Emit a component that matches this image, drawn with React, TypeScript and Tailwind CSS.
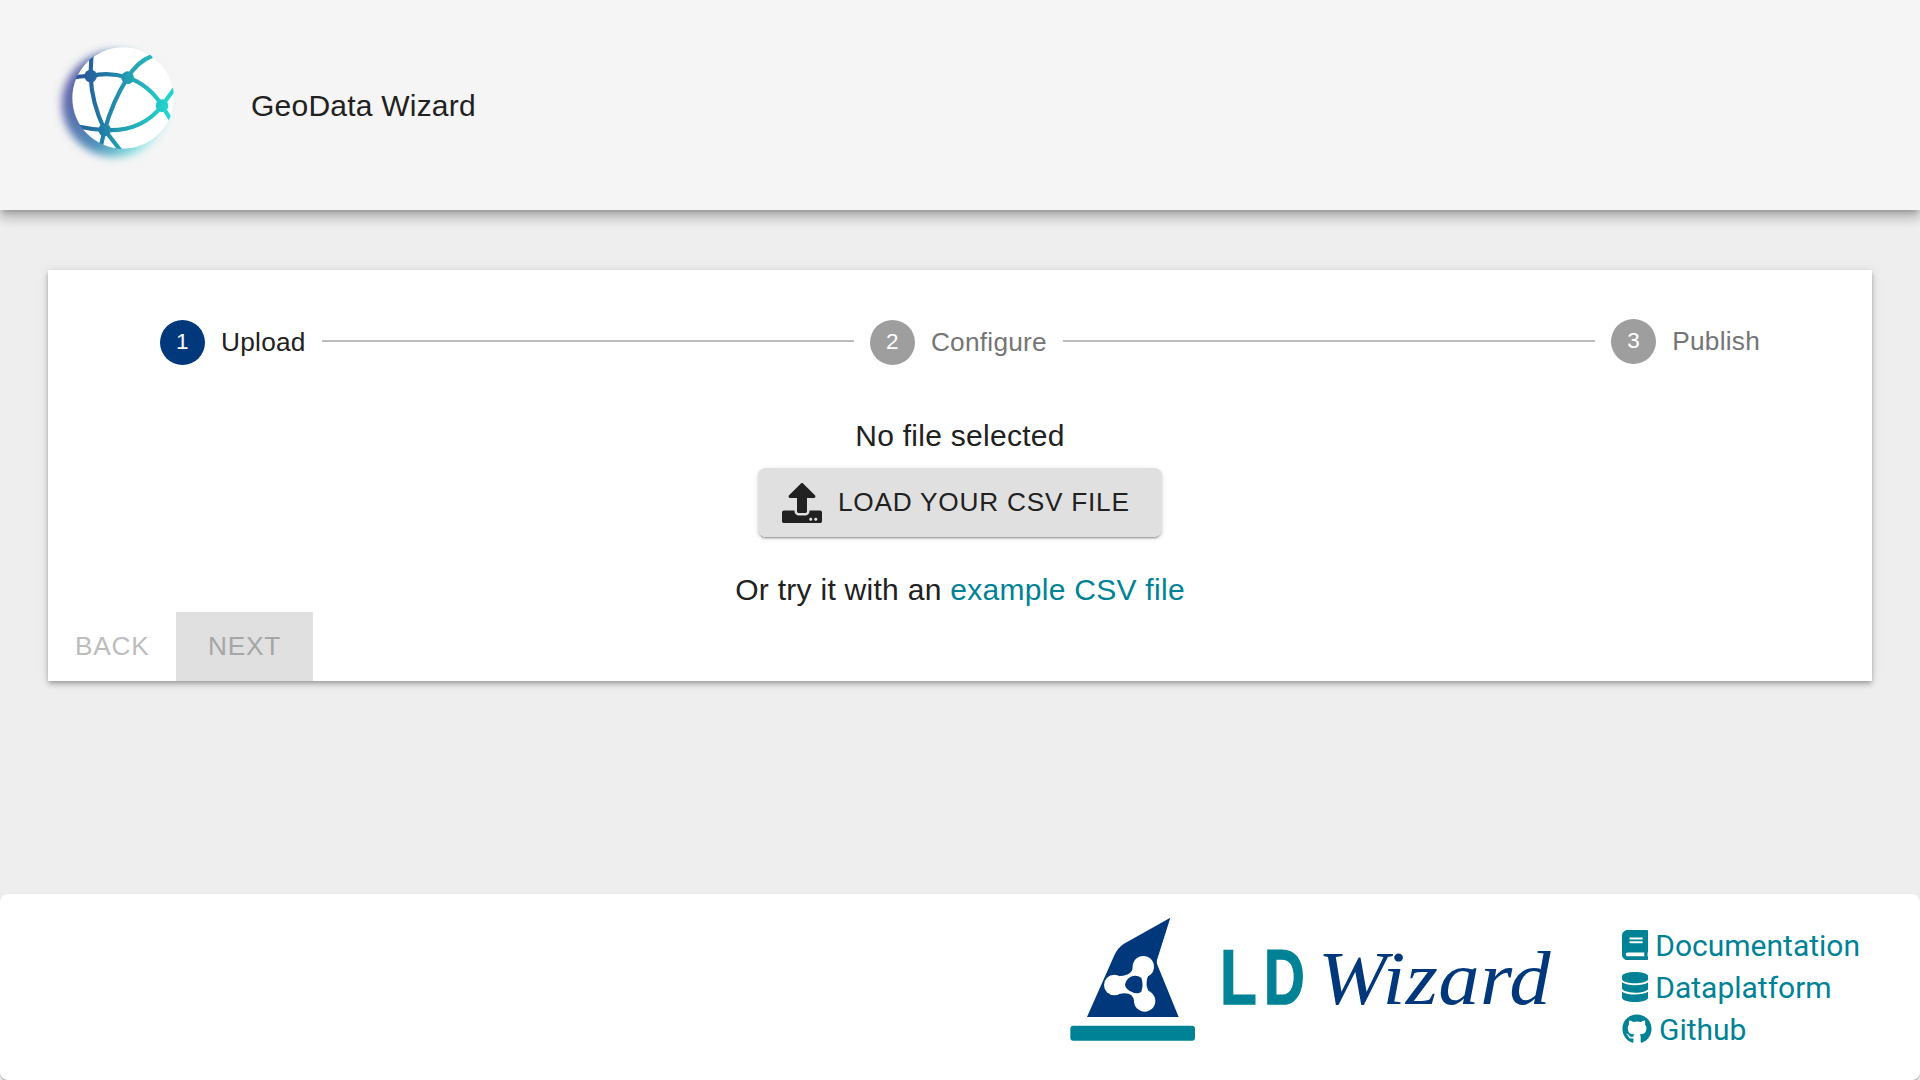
import React from "react";
import { FaBook, FaDatabase, FaGithub, FaUpload } from "react-icons/fa";

function GlobeLogo() {
  return (
    <svg className="ml-10 h-[150px] w-40 shrink-0" viewBox="0 0 480 450">
      <defs>
        <linearGradient id="halo" gradientUnits="userSpaceOnUse" x1="80" y1="180" x2="370" y2="300">
          <stop offset="0" stopColor="#5d62a8" />
          <stop offset="0.45" stopColor="#4f90ba" />
          <stop offset="0.8" stopColor="#7fdcdc" />
          <stop offset="1" stopColor="#c8f2f2" />
        </linearGradient>
        <linearGradient id="mesh" gradientUnits="userSpaceOnUse" x1="110" y1="180" x2="390" y2="220">
          <stop offset="0" stopColor="#2a5599" />
          <stop offset="0.3" stopColor="#2079a6" />
          <stop offset="0.55" stopColor="#24a2b3" />
          <stop offset="1" stopColor="#24d6d0" />
        </linearGradient>
        <filter id="soft" x="-20%" y="-20%" width="140%" height="140%">
          <feGaussianBlur stdDeviation="13" />
        </filter>
        <clipPath id="disc">
          <circle cx="249" cy="204" r="153" />
        </clipPath>
      </defs>
      <circle cx="225" cy="222" r="159" fill="url(#halo)" filter="url(#soft)" />
      <circle cx="249" cy="204" r="152" fill="#fff" />
      <g clipPath="url(#disc)" fill="none" stroke="url(#mesh)" strokeWidth="12.5">
        <path d="M155 70 C153 100 152 120 152 138 C154 200 170 250 194 300 L242 362" />
        <path d="M90 145 Q120 137 152 138 C190 129 230 132 263 143 C305 155 345 190 366 227 L396 275" />
        <path d="M263 143 C280 115 305 90 336 78" />
        <path d="M263 143 C230 195 208 250 194 300 L182 350" />
        <path d="M110 289 Q150 298 194 300 C265 304 325 280 366 227 L402 178" />
      </g>
      <g fill="url(#mesh)">
        <circle cx="152" cy="138" r="19" />
        <circle cx="263" cy="143" r="19" />
        <circle cx="194" cy="300" r="19" />
        <circle cx="366" cy="227" r="19" />
      </g>
    </svg>
  );
}

function WizardLogo() {
  return (
    <svg className="mt-[6px] h-[160px] w-[530px] shrink-0" viewBox="0 0 530 160">
      <g transform="scale(0.33333)">
        <path d="M361 53 L321 180 Q319 187 322 194 L386 351 H111 L193 166 Q203 143 222 131 Z" fill="#00387b" />
        <g fill="#fff">
          <circle cx="280" cy="200" r="32" />
          <circle cx="193" cy="255" r="31" />
          <circle cx="284" cy="303" r="32" />
          <path d="M249 195 Q250 226 210 228 L193 240 V275 L207 282 Q249 272 253 305 L284 300 L313 291 Q286 270 290 245 Q291 226 308 214 L280 190 Z" />
        </g>
        <path d="M225 254 Q227 240 241 231 Q258 223 274 233 Q281 253 274 275 Q262 284 244 275 Q226 266 225 254 Z" fill="#00387b" />
        <rect x="61" y="377" width="374" height="45" rx="9" fill="#008296" />
      </g>
      <g fill="#008296" stroke="#008296" strokeWidth="1.5" fontFamily="'Liberation Sans Narrow','Liberation Sans',sans-serif" fontWeight="700" fontSize="78">
        <text x="170" y="104" textLength="37" lengthAdjust="spacingAndGlyphs">L</text>
        <text x="214" y="104" textLength="41" lengthAdjust="spacingAndGlyphs">D</text>
      </g>
      <text x="268" y="103.500" textLength="233" lengthAdjust="spacingAndGlyphs" fill="#00387b" fontFamily="'Z003','URW Chancery L','Liberation Serif',serif" fontStyle="italic" fontSize="77">Wizard</text>
    </svg>
  );
}

function Step({ n, label, active }: { n: number; label: string; active?: boolean }) {
  return (
    <div className={n === 3 ? "-mt-px flex items-center" : "mt-px flex items-center"}>
      <span className={`flex size-[45px] items-center justify-center rounded-full text-[22.5px] leading-none text-white ${active ? "bg-[#00387b]" : "bg-[#9e9e9e]"}`}>
        {n}
      </span>
      <span className={`ml-4 text-[26.25px] leading-[37.5px] tracking-[0.00938em] ${active ? "text-[#212121]" : "text-[#757575]"}`}>
        {label}
      </span>
    </div>
  );
}

const links = [
  { label: "Documentation", Icon: FaBook, size: "w-[26.25px]" },
  { label: "Dataplatform", Icon: FaDatabase, size: "w-[26.25px]" },
  { label: "Github", Icon: FaGithub, size: "w-[30px]" },
];

export default function App() {
  return (
    <div className="flex h-[1080px] w-[1920px] flex-col overflow-hidden bg-[#eeeeee] font-['Liberation_Sans',sans-serif] text-[30px] leading-[45px] tracking-[0.00938em] text-[#212121]">
      <header className="flex h-[210px] shrink-0 items-center bg-[#f5f5f5] shadow-[0px_5px_5px_-3px_rgba(0,0,0,0.2),0px_8px_10px_1px_rgba(0,0,0,0.14),0px_3px_14px_2px_rgba(0,0,0,0.12)]">
        <GlobeLogo />
        <h1 className="ml-[51px] tracking-[0.0075em]">GeoData Wizard</h1>
      </header>

      <main className="mx-12 mt-[60px] flex h-[411px] shrink-0 flex-col bg-white shadow-[0px_2px_4px_-1px_rgba(0,0,0,0.2),0px_4px_5px_0px_rgba(0,0,0,0.14),0px_1px_10px_0px_rgba(0,0,0,0.12)]">
        <div className="mt-[49px] flex h-[46px] items-center pr-[112px] pl-[112px]">
          <Step n={1} label="Upload" active />
          <div className="mx-4 h-[2px] flex-1 -translate-y-[1px] bg-[#bdbdbd]" />
          <Step n={2} label="Configure" />
          <div className="mx-4 h-[2px] flex-1 -translate-y-[1px] bg-[#bdbdbd]" />
          <Step n={3} label="Publish" />
        </div>
        <div className="mt-[48px] flex flex-col items-center">
          <p>No file selected</p>
          <button className="mt-[10px] flex h-[69px] w-[404px] items-center rounded-[7.5px] bg-[#e0e0e0] pl-6 text-[26.25px] tracking-[0.02857em] shadow-[0px_3px_1px_-2px_rgba(0,0,0,0.2),0px_2px_2px_0px_rgba(0,0,0,0.14),0px_1px_5px_0px_rgba(0,0,0,0.12)]">
            <FaUpload className="size-10" />
            <span className="ml-4">LOAD YOUR CSV FILE</span>
          </button>
          <p className="mt-[30px]">
            Or try it with an <a className="text-[#008296]">example CSV file</a>
          </p>
        </div>
        <div className="mt-auto flex h-[69px] text-[26.25px] tracking-[0.02857em]">
          <button className="w-32 pl-[27px] text-left text-[#bdbdbd]">BACK</button>
          <button className="w-[137px] bg-[#e0e0e0] text-[#a6a6a6]">NEXT</button>
        </div>
      </main>

      <footer className="mt-auto flex h-[186px] shrink-0 justify-end rounded-[7.5px] bg-white shadow-[0px_2px_1px_-1px_rgba(0,0,0,0.2),0px_1px_1px_0px_rgba(0,0,0,0.14),0px_1px_3px_0px_rgba(0,0,0,0.12)]">
        <WizardLogo />
        <nav className="mt-[30px] ml-[42px] w-[298px] font-['Roboto',sans-serif] tracking-normal">
          {links.map(({ label, Icon, size }) => (
            <a key={label} className="flex h-[42px] items-center text-[#008296]">
              <Icon className={`h-[30px] ${size}`} />
              <span className="ml-[7px]">{label}</span>
            </a>
          ))}
        </nav>
      </footer>
    </div>
  );
}
